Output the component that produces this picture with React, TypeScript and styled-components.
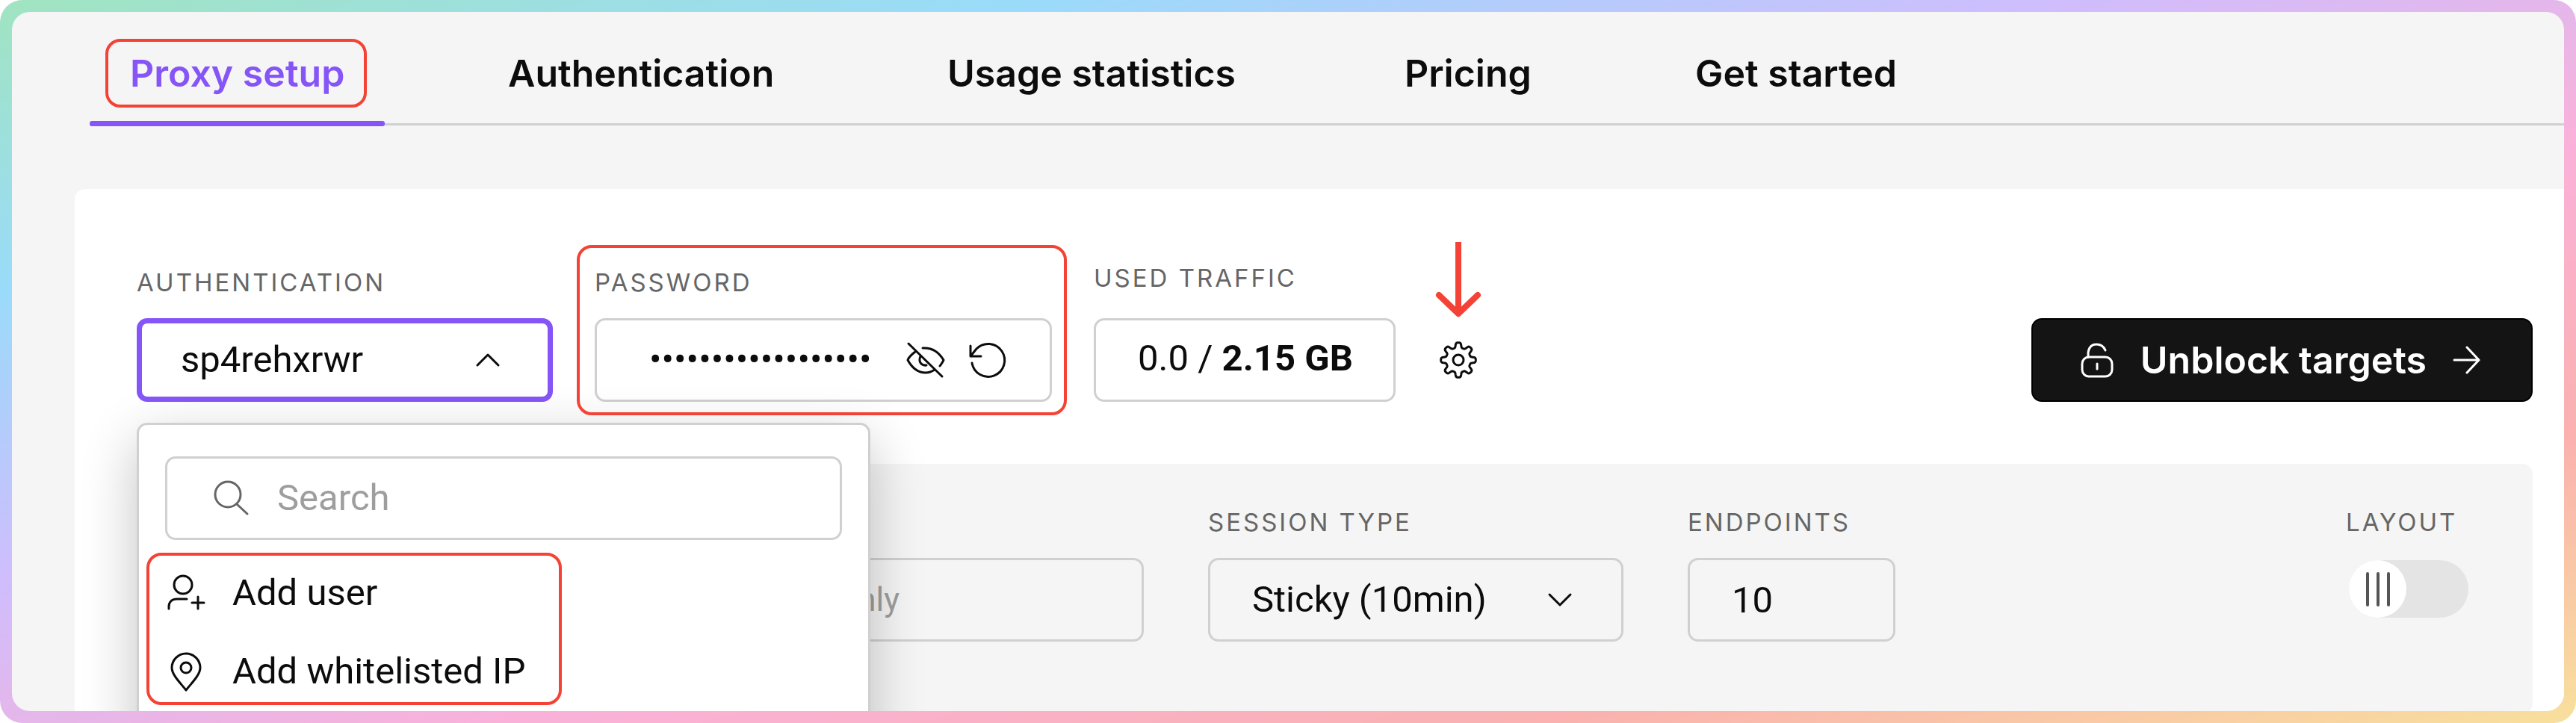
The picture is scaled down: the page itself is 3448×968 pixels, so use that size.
import React, { useState } from "react";
import styled, { createGlobalStyle, css } from "styled-components";

const heading = `Inter, "Liberation Sans", sans-serif`;
const body = `Roboto, "Liberation Sans", sans-serif`;

const color = {
  ink: "#0c0c0c",
  violet: "#8655f8",
  red: "#f44336",
  line: "#d0d0d0",
  surface: "#f5f5f5",
  label: "#666666",
  muted: "#9e9e9e",
};

const GlobalStyle = createGlobalStyle`
  *, *::before, *::after { box-sizing: border-box; }
  body { margin: 0; background: #fff; color: ${color.ink}; font-family: ${body}; }
  button, input, select { font: inherit; color: inherit; margin: 0; }
`;

const Frame = styled.div`
  display: flex;
  height: 100vh;
  padding: 16px;
  border-radius: 30px;
  background: linear-gradient(
    to bottom right,
    #a0e4c0 0%,
    #9adbfa 20%,
    #cfbdfd 40%,
    #fab1d9 60%,
    #fab1af 80%,
    #f8e09c 100%
  );
`;

const Screen = styled.main`
  flex: 1;
  min-width: 0;
  display: flex;
  flex-direction: column;
  overflow: hidden;
  border-radius: 24px;
  background: ${color.surface};
`;

const Tabs = styled.nav`
  flex: none;
  display: grid;
  grid-template-columns: 506px 588px 612px 389px 1fr;
  height: 152px;
  margin-left: 104px;
  border-bottom: 3px solid ${color.line};
`;

const Tab = styled.a<{ $active?: boolean }>`
  position: relative;
  justify-self: start;
  padding: 52px 54px 0;
  font: 600 50px/60px ${heading};
  white-space: nowrap;
  text-decoration: none;
  color: ${(p) => (p.$active ? color.violet : color.ink)};
  ${(p) =>
    p.$active &&
    css`
      &::after {
        content: "";
        position: absolute;
        left: 0;
        right: 0;
        bottom: -4px;
        height: 7px;
        border-radius: 3px;
        background: ${color.violet};
      }
    `}
`;

/* Red outline laid over the part that it points out. */
const Callout = styled.span<{ $inset: string }>`
  position: absolute;
  inset: ${(p) => p.$inset};
  border: 4px solid ${color.red};
  border-radius: 20px;
  pointer-events: none;
  z-index: 3;
`;

const Panel = styled.section`
  flex: 1;
  margin: 85px 0 0 84px;
  padding: 97px 42px 0 83px;
  border-radius: 14px 0 0 0;
  background: #fff;
`;

const AccountRow = styled.div`
  display: flex;
  align-items: flex-end;
  gap: 56px;
`;

const Field = styled.div<{ $width: number; $gap?: number }>`
  position: relative;
  flex: none;
  display: flex;
  flex-direction: column;
  gap: ${(p) => p.$gap ?? 26}px;
  width: ${(p) => p.$width}px;
`;

const labelText = css`
  font: 400 33px/44px ${heading};
  letter-spacing: 3px;
  text-transform: uppercase;
  white-space: nowrap;
  color: ${color.label};
`;

const Label = styled.label`
  ${labelText}
`;

const Caption = styled.span`
  ${labelText}
`;

const boxStyle = css`
  width: 100%;
  height: 112px;
  padding: 0 56px;
  border: 3px solid ${color.line};
  border-radius: 14px;
  background: transparent;
  font: 400 49px/60px ${body};
  color: ${color.ink};
`;

const UserPicker = styled.button`
  ${boxStyle}
  display: flex;
  align-items: center;
  justify-content: space-between;
  padding: 0 63px 0 52px;
  border: 7px solid ${color.violet};
  text-align: left;
`;

const Box = styled.div`
  ${boxStyle}
  display: flex;
  align-items: center;
`;

const PasswordBox = styled(Box)`
  padding: 0 56px 0 70px;
  gap: 26px;
`;

const PasswordInput = styled.input`
  flex: 1;
  min-width: 0;
  padding: 0;
  border: 0;
  outline: 0;
  background: transparent;
`;

const IconButton = styled.button`
  flex: none;
  display: grid;
  place-items: center;
  width: 56px;
  height: 56px;
  padding: 0;
  border: 0;
  background: transparent;
`;

const TrafficBox = styled(Box)`
  padding-bottom: 4px;
  white-space: pre;

  strong {
    font-weight: 700;
  }
`;

const SettingsAnchor = styled.div`
  position: relative;
  display: grid;
  place-items: center;
  height: 112px;
`;

const PointerArrow = styled.svg`
  position: absolute;
  left: -4px;
  bottom: 112px;
`;

const UnblockButton = styled.button`
  flex: none;
  display: flex;
  align-items: center;
  gap: 34px;
  height: 112px;
  margin-left: auto;
  padding: 0 66px 0 62px;
  border: 2px solid #000;
  border-radius: 14px;
  background: #141414;
  color: #fff;
  font: 600 50px/60px ${heading};
`;

const Dropdown = styled.div`
  position: absolute;
  top: calc(100% + 28px);
  left: 0;
  z-index: 2;
  width: 982px;
  height: 600px;
  padding: 42px 35px 0;
  border: 3px solid ${color.line};
  border-radius: 14px;
  background: #fff;
  box-shadow: 0 24px 72px rgba(0, 0, 0, 0.24);
`;

const SearchBox = styled(Box)`
  gap: 35px;
  padding: 0 56px;
`;

const SearchInput = styled.input`
  flex: 1;
  min-width: 0;
  padding: 0;
  border: 0;
  outline: 0;
  background: transparent;

  &::placeholder {
    color: ${color.muted};
    opacity: 1;
  }
`;

const ActionList = styled.ul`
  position: relative;
  margin: 18px 0 0;
  padding: 0;
  list-style: none;
`;

const Action = styled.button`
  display: flex;
  align-items: center;
  gap: 34px;
  width: 100%;
  height: 105px;
  padding: 0;
  border: 0;
  background: transparent;
  font: 400 49px/60px ${body};
`;

const TargetRow = styled.div`
  display: flex;
  align-items: flex-start;
  gap: 86px;
  margin-top: 83px;
  padding: 56px 86px 97px;
  border-radius: 14px;
  background: ${color.surface};
`;

const SelectWrap = styled.div`
  position: relative;

  svg {
    position: absolute;
    right: 68px;
    top: 46px;
    pointer-events: none;
  }
`;

const Select = styled.select`
  ${boxStyle}
  appearance: none;
`;

const TextInput = styled.input`
  ${boxStyle}

  &::placeholder {
    color: ${color.muted};
    opacity: 1;
  }
`;

const PlanInput = styled(TextInput)`
  font-size: 44px;
`;

const LayoutField = styled(Field)`
  margin-left: auto;
`;

const Switch = styled.span`
  position: relative;
  display: block;
  align-self: flex-end;
  width: 160px;
  height: 77px;
`;

const SwitchInput = styled.input`
  appearance: none;
  display: block;
  width: 100%;
  height: 100%;
  margin: 0;
  border-radius: 39px;
  background: #e4e4e4;
`;

const Knob = styled.span<{ $on: boolean }>`
  position: absolute;
  top: 0;
  left: ${(p) => (p.$on ? "83px" : "0")};
  display: grid;
  place-items: center;
  width: 77px;
  height: 77px;
  border-radius: 50%;
  background: #fff;
  pointer-events: none;
`;

type IconProps = { size?: number; width?: number; tone?: string; children: React.ReactNode };

const Icon = ({ size = 56, width = 4, tone = "currentColor", children }: IconProps) => (
  <svg
    width={size}
    height={size}
    viewBox={`0 0 ${size} ${size}`}
    fill="none"
    stroke={tone}
    strokeWidth={width}
    strokeLinecap="round"
    strokeLinejoin="round"
    aria-hidden="true"
  >
    {children}
  </svg>
);

const Chevron = ({ up }: { up?: boolean }) => (
  <svg
    width="34"
    height="20"
    viewBox="0 0 34 20"
    fill="none"
    stroke="currentColor"
    strokeWidth="3"
    strokeLinecap="round"
    strokeLinejoin="round"
    aria-hidden="true"
  >
    <path d={up ? "M3 17 17 3l14 14" : "M3 3l14 14L31 3"} />
  </svg>
);

/* Eight rounded teeth traced around a circle. */
const gearOutline = Array.from({ length: 161 }, (_, i) => {
  const a = (i / 160) * Math.PI * 2;
  const r = 20 + 3.4 * Math.tanh(2.2 * Math.cos(a * 8) - 0.1);
  return `${i ? "L" : "M"}${(28 + r * Math.sin(a)).toFixed(2)} ${(28 - r * Math.cos(a)).toFixed(2)}`;
}).join("");

const tabs = ["Authentication", "Usage statistics", "Pricing", "Get started"];

export default function App() {
  const [horizontal, setHorizontal] = useState(false);

  return (
    <>
      <GlobalStyle />
      <Frame>
        <Screen>
          <Tabs>
            <Tab href="#proxy-setup" $active aria-current="page">
              Proxy setup
              <Callout $inset="36px 24px 21px 21px" />
            </Tab>
            {tabs.map((name) => (
              <Tab key={name} href={`#${name.toLowerCase().replace(" ", "-")}`}>
                {name}
              </Tab>
            ))}
          </Tabs>

          <Panel>
            <AccountRow>
              <Field $width={557}>
                <Label htmlFor="user">Authentication</Label>
                <UserPicker id="user" type="button" aria-haspopup="listbox" aria-expanded="true">
                  sp4rehxrwr
                  <Chevron up />
                </UserPicker>
                <Dropdown>
                  <SearchBox>
                    <Icon width={3} tone={color.label}>
                      <circle cx="25" cy="23" r="17" />
                      <path d="M37 36 51 49" />
                    </Icon>
                    <SearchInput type="text" placeholder="Search" aria-label="Search" />
                  </SearchBox>
                  <ActionList>
                    <li>
                      <Action type="button">
                        <Icon width={3}>
                          <circle cx="24" cy="17" r="12" />
                          <path d="M5 49v-3c0-6 4-10 11-10h13M44 33v16M36 41h16" />
                        </Icon>
                        Add user
                      </Action>
                    </li>
                    <li>
                      <Action type="button">
                        <Icon width={3}>
                          <path d="M28 53C22 45 9 33 9 23a19 19 0 0 1 38 0C47 33 34 45 28 53Z" />
                          <circle cx="28" cy="23" r="7" />
                        </Icon>
                        Add whitelisted IP
                      </Action>
                    </li>
                    <Callout $inset="-1px 375px 7px -25px" />
                  </ActionList>
                </Dropdown>
              </Field>

              <Field $width={612}>
                <Label htmlFor="password">Password</Label>
                <PasswordBox>
                  <PasswordInput id="password" type="password" defaultValue="proxy-password-018" />
                  <IconButton type="button" aria-label="Show password">
                    <Icon width={3}>
                      <path d="M5 6 50 50" />
                      <path d="M24 12c13-1 22 6 28 16-1 3-3 5-5 8" />
                      <path d="M14 17C10 20 6 23 4 28c6 11 14 17 24 17 5 0 9-2 12-4" />
                      <path d="M21 23c-3 7 1 13 8 12" />
                    </Icon>
                  </IconButton>
                  <IconButton type="button" aria-label="Reset password">
                    <Icon width={3}>
                      <path d="M6 9v14h14M6 23l8-10A22 22 0 1 1 8 32" />
                    </Icon>
                  </IconButton>
                </PasswordBox>
                <Callout $inset="-28px -20px -18px -24px" />
              </Field>

              <Field $width={404} $gap={32}>
                <Caption>Used traffic</Caption>
                <TrafficBox>
                  {"0.0 / "}
                  <strong>2.15 GB</strong>
                </TrafficBox>
              </Field>

              <SettingsAnchor>
                <IconButton type="button" aria-label="Settings">
                  <Icon width={3}>
                    <path d={gearOutline} />
                    <circle cx="28" cy="28" r="7" />
                  </Icon>
                </IconButton>
                <PointerArrow
                  width="64"
                  height="104"
                  viewBox="0 0 64 104"
                  fill="none"
                  stroke={color.red}
                  strokeWidth="8"
                  strokeLinejoin="round"
                  aria-hidden="true"
                >
                  <path d="M32 2v94" />
                  <path d="M6 73 32 98l26-25" strokeLinecap="round" />
                </PointerArrow>
              </SettingsAnchor>

              <UnblockButton type="button">
                <Icon size={48} width={3}>
                  <rect x="4" y="20" width="40" height="26" rx="9" />
                  <path d="M12 20v-6C13 7 17 3 23 3c6 0 10 3 12 8M24 29v7" />
                </Icon>
                Unblock targets
                <Icon size={40} width={3}>
                  <path d="M3 20h33M20 3l16 17-16 17" />
                </Icon>
              </UnblockButton>
            </AccountRow>

            <TargetRow>
              <Field $width={500}>
                <Label htmlFor="location">Location</Label>
                <SelectWrap>
                  <Select id="location" defaultValue="Random">
                    <option>Random</option>
                  </Select>
                  <Chevron />
                </SelectWrap>
              </Field>
              <Field $width={676}>
                <Label htmlFor="city">City</Label>
                <PlanInput id="city" type="text" placeholder="Enterprise only" disabled />
              </Field>
              <Field $width={556}>
                <Label htmlFor="session">Session type</Label>
                <SelectWrap>
                  <Select id="session" defaultValue="Sticky (10min)">
                    <option>Sticky (10min)</option>
                    <option>Rotating</option>
                  </Select>
                  <Chevron />
                </SelectWrap>
              </Field>
              <Field $width={278}>
                <Label htmlFor="endpoints">Endpoints</Label>
                <TextInput id="endpoints" type="text" inputMode="numeric" defaultValue="10" />
              </Field>
              <LayoutField $width={164} $gap={29}>
                <Label htmlFor="layout">Layout</Label>
                <Switch>
                  <SwitchInput
                    id="layout"
                    type="checkbox"
                    role="switch"
                    checked={horizontal}
                    onChange={(e) => setHorizontal(e.target.checked)}
                  />
                  <Knob $on={horizontal}>
                    <Icon size={48} tone="#555">
                      <path d="M10 3v42M24 3v42M38 3v42" />
                    </Icon>
                  </Knob>
                </Switch>
              </LayoutField>
            </TargetRow>
          </Panel>
        </Screen>
      </Frame>
    </>
  );
}
